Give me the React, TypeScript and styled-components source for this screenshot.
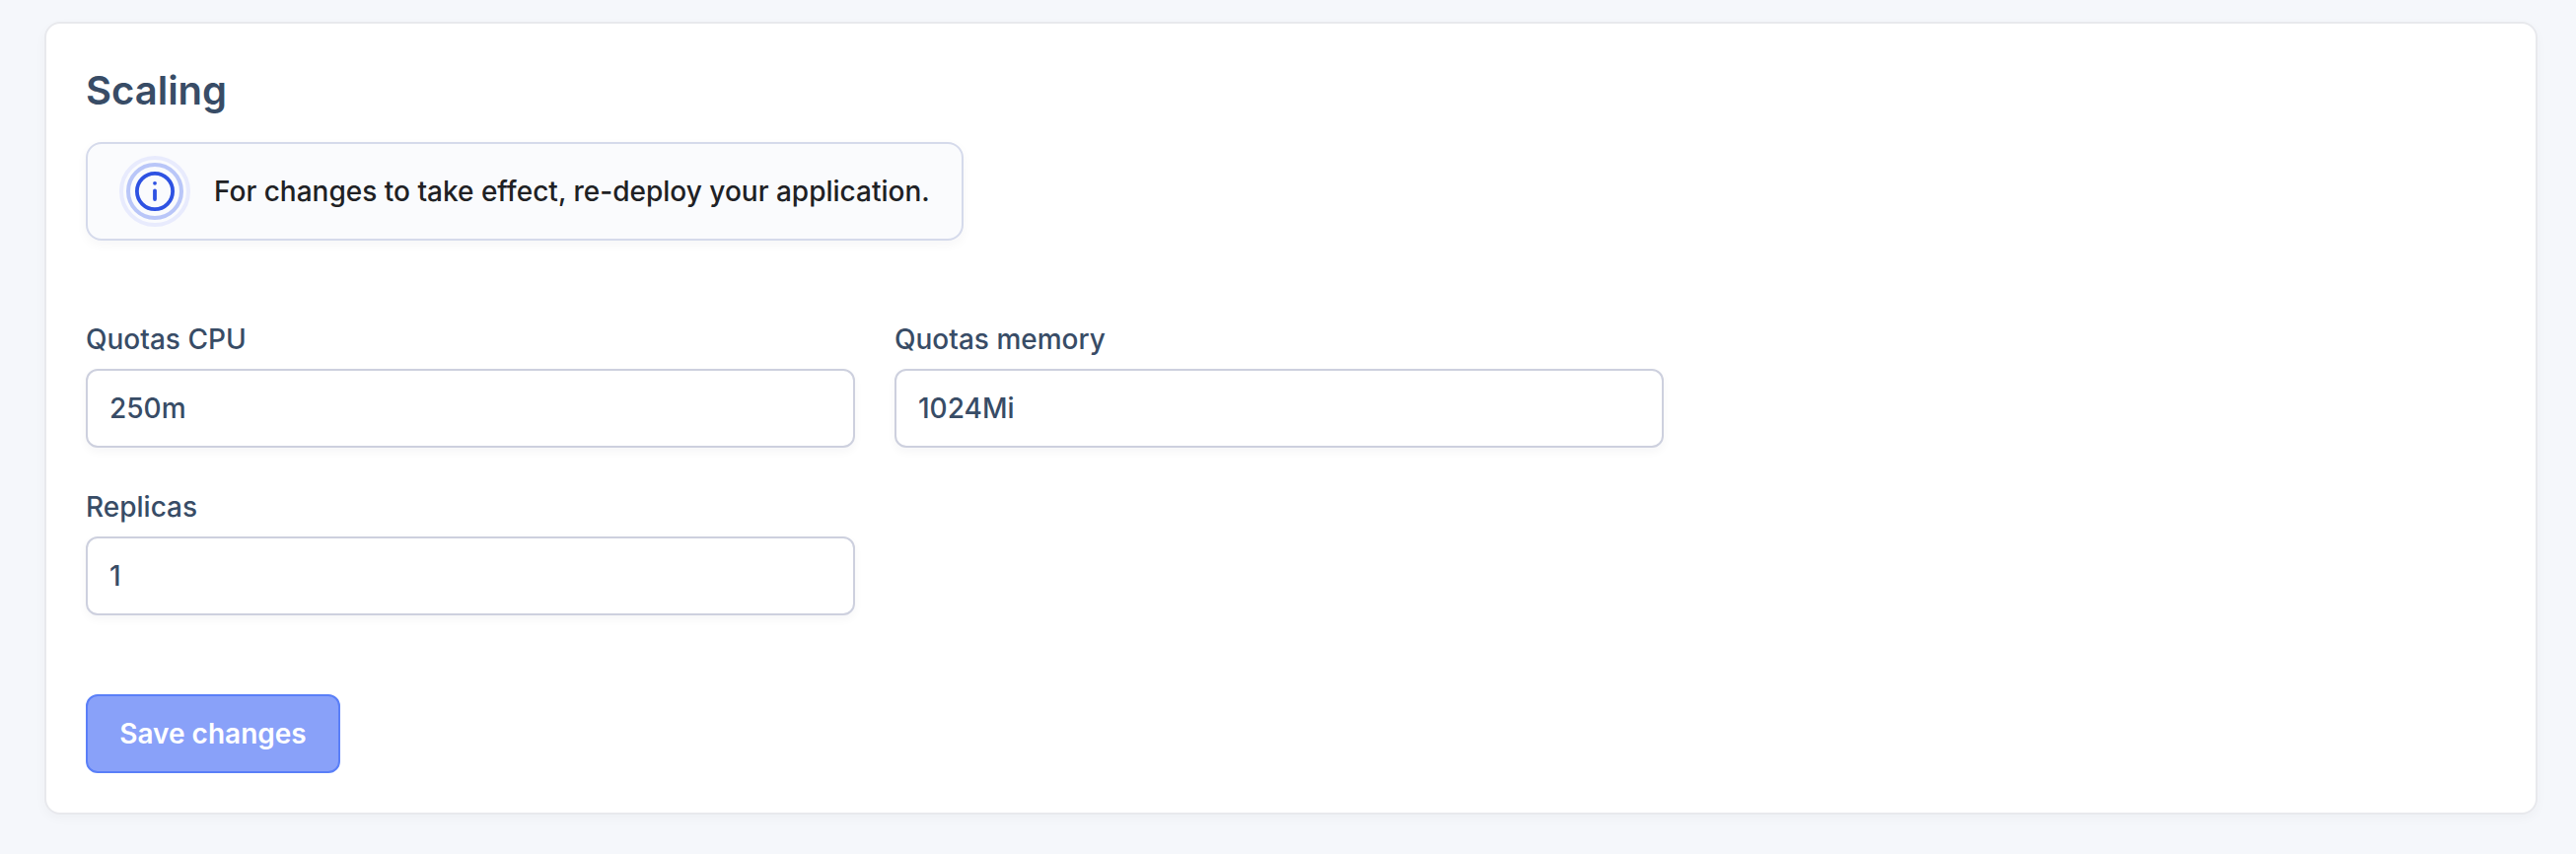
import React from "react";
import styled, { createGlobalStyle } from "styled-components";

const GlobalStyle = createGlobalStyle`
  * { box-sizing: border-box; }
  body {
    margin: 0;
    background: #f5f7fb;
    font-family: Inter, "Liberation Sans", sans-serif;
    -webkit-font-smoothing: antialiased;
  }
`;

const Page = styled.main`
  height: 866px;
  padding: 22px 39px 40px 45px;
  background: #f5f7fb;
`;

const Card = styled.section`
  height: 804px;
  padding: 40px;
  background: #fff;
  border: 2px solid #e8e9ed;
  border-radius: 16px;
  box-shadow: 0 4px 12px rgba(20, 20, 40, 0.03);
`;

const Title = styled.h2`
  margin: 0 0 24px;
  font-size: 40px;
  line-height: 56px;
  font-weight: 600;
  color: #384c66;
`;

const Notice = styled.div`
  display: flex;
  align-items: center;
  gap: 24px;
  width: 890px;
  height: 100px;
  padding-left: 32px;
  background: #fafbfd;
  border: 2px solid #d5daeb;
  border-radius: 16px;
  box-shadow: 0 4px 12px rgba(20, 20, 40, 0.04);
`;

const NoticeIcon = styled.svg`
  display: block;
  flex: none;
  width: 72px;
  height: 72px;
`;

const NoticeText = styled.span`
  font-size: 28px;
  line-height: 40px;
  font-weight: 500;
  white-space: nowrap;
  color: #202124;
`;

const Form = styled.form`
  display: grid;
  grid-template-columns: 780px 780px;
  gap: 40px;
  margin-top: 80px;
`;

const Field = styled.label<{ $column: number }>`
  grid-column: ${({ $column }) => $column};
  display: flex;
  flex-direction: column;
  gap: 10px;
`;

const FieldName = styled.span`
  font-size: 28px;
  line-height: 40px;
  font-weight: 500;
  color: #384c66;
`;

const Input = styled.input`
  width: 100%;
  height: 80px;
  padding: 0 22px;
  font: 500 28px/40px Inter, "Liberation Sans", sans-serif;
  color: #384c66;
  background: #fff;
  border: 2px solid #cdd0de;
  border-radius: 12px;
  outline: none;
  box-shadow: 0 4px 10px rgba(20, 20, 40, 0.04);
`;

const SaveButton = styled.button`
  grid-column: 1;
  justify-self: start;
  width: 258px;
  height: 80px;
  margin-top: 40px;
  padding: 0;
  font: 600 28px/40px Inter, "Liberation Sans", sans-serif;
  color: #fff;
  background: #89a1f9;
  border: 2px solid #5a7ff8;
  border-radius: 12px;
`;

const fields = [
  { name: "Quotas CPU", value: "250m", column: 1 },
  { name: "Quotas memory", value: "1024Mi", column: 2 },
  { name: "Replicas", value: "1", column: 1 },
];

const InfoIcon = () => (
  <NoticeIcon viewBox="0 0 72 72" fill="none">
    <circle cx="36" cy="36" r="34" stroke="#e8ebfd" strokeWidth="4" />
    <circle cx="36" cy="36" r="27" stroke="#b9c6f8" strokeWidth="4" />
    <circle cx="36" cy="36" r="18.1" stroke="#2e52e2" strokeWidth="3.8" />
    <circle cx="36" cy="27.8" r="1.9" fill="#2e52e2" />
    <path d="M36 35.3v8.8" stroke="#2e52e2" strokeWidth="3.8" strokeLinecap="round" />
  </NoticeIcon>
);

export default function App() {
  return (
    <Page>
      <GlobalStyle />
      <Card>
        <Title>Scaling</Title>
        <Notice>
          <InfoIcon />
          <NoticeText>For changes to take effect, re-deploy your application.</NoticeText>
        </Notice>
        <Form onSubmit={(event: React.FormEvent) => event.preventDefault()}>
          {fields.map(({ name, value, column }) => (
            <Field key={name} $column={column}>
              <FieldName>{name}</FieldName>
              <Input defaultValue={value} />
            </Field>
          ))}
          <SaveButton type="submit">Save changes</SaveButton>
        </Form>
      </Card>
    </Page>
  );
}
